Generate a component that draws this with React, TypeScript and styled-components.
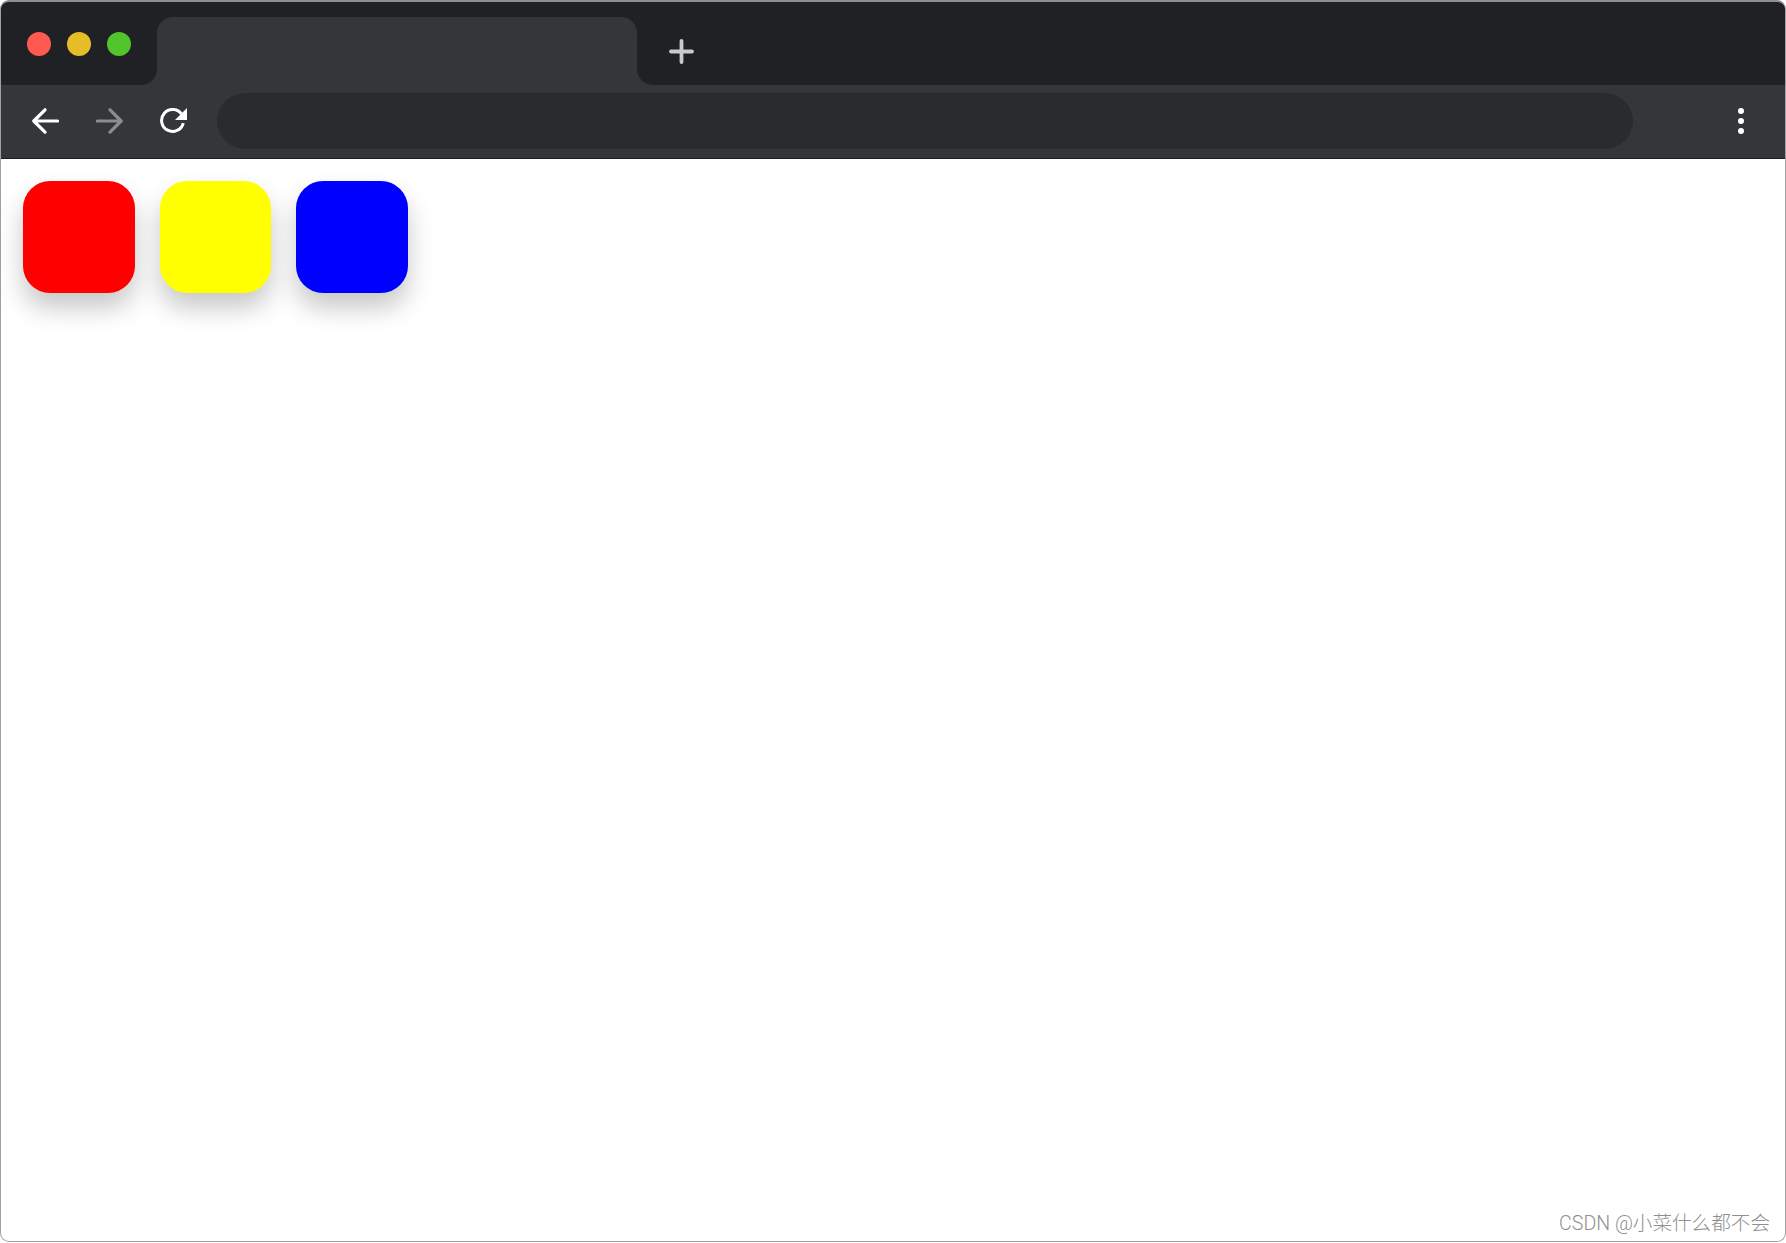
import React from 'react';
import styled, { createGlobalStyle } from 'styled-components';

const GlobalStyle = createGlobalStyle`
  html, body {
    margin: 0;
    padding: 0;
    background: #fff;
  }
  * {
    box-sizing: border-box;
  }
`;

const Frame = styled.div`
  position: relative;
  width: 1786px;
  height: 1242px;
  display: flex;
  flex-direction: column;
  overflow: hidden;
  background: #fff;
  border: 1px solid #a0a0a0;
  border-top: 2px solid #8e8e8e;
  border-radius: 9px;
`;

const TabStrip = styled.div`
  display: flex;
  flex: none;
  height: 83px;
  background: #33373a;
`;

const StripEnd = styled.div`
  display: flex;
  align-items: center;
  flex: none;
  width: 156px;
  padding: 1px 0 0 26px;
  gap: 16px;
  background: #202124;
  border-bottom-right-radius: 16px;
`;

const Light = styled.span<{ $color: string }>`
  width: 24px;
  height: 24px;
  border-radius: 50%;
  background: ${(p) => p.$color};
`;

const TabSlot = styled.div`
  flex: none;
  width: 480px;
  padding-top: 15px;
  background: #202124;
`;

const Tab = styled.div`
  height: 100%;
  background: #33373a;
  border-radius: 16px 16px 0 0;
`;

const NewTabArea = styled.div`
  flex: 1;
  padding: 37px 0 0 32px;
  background: #202124;
  border-bottom-left-radius: 16px;
`;

const Toolbar = styled.div`
  display: flex;
  align-items: center;
  flex: none;
  height: 74px;
  padding: 0 41px 1px 31px;
  background: #33373a;
  border-bottom: 1px solid #1c1d1f;
`;

const NavIcon = styled.svg`
  display: block;
  flex: none;
  width: 27px;
  height: 26px;
  margin-right: 37px;
`;

const AddressBar = styled.div`
  flex: 1;
  height: 56px;
  margin-left: -7px;
  background: #292c2f;
  border-radius: 28px;
`;

const MenuDots = styled.div`
  display: flex;
  flex-direction: column;
  flex: none;
  gap: 4px;
  margin-left: 105px;
`;

const Dot = styled.span`
  width: 6px;
  height: 6px;
  border-radius: 50%;
  background: #fff;
`;

const Content = styled.div`
  display: flex;
  flex: 1;
  align-items: flex-start;
  gap: 24.6px;
  padding: 22.3px 0 0 22.3px;
`;

const Tile = styled.div<{ $color: string }>`
  width: 111.7px;
  height: 111.7px;
  border-radius: 27px;
  background: ${(p) => p.$color};
  box-shadow: 0 15px 26px rgba(0, 0, 0, 0.22);
`;

const Watermark = styled.div`
  position: absolute;
  right: 15px;
  bottom: 3px;
  font-family: 'Roboto', 'Noto Sans CJK SC', sans-serif;
  font-size: 19.6px;
  font-weight: 300;
  line-height: 28px;
  color: #8f8f8f;
  white-space: nowrap;
`;

const LIGHTS = ['#ff5a52', '#e6bd27', '#53c52c'];
const TILES = ['#ff0000', '#ffff00', '#0000ff'];

export default function App() {
  return (
    <>
      <GlobalStyle />
      <Frame>
        <TabStrip>
          <StripEnd>
            {LIGHTS.map((color) => (
              <Light key={color} $color={color} />
            ))}
          </StripEnd>
          <TabSlot>
            <Tab />
          </TabSlot>
          <NewTabArea>
            <svg width="25" height="25" viewBox="0 0 25 25" style={{ display: 'block' }}>
              <path d="M12.5 2V23M2 12.5H23" stroke="#c8cbce" strokeWidth="3.8" strokeLinecap="round" fill="none" />
            </svg>
          </NewTabArea>
        </TabStrip>
        <Toolbar>
          <NavIcon viewBox="0 0 27 26">
            <path d="M25.5 13H2M13 1.8L1.8 13L13 24.2" stroke="#fff" strokeWidth="3.2" strokeLinecap="round" strokeLinejoin="round" fill="none" />
          </NavIcon>
          <NavIcon viewBox="0 0 27 26">
            <path d="M1.5 13H25M14 1.8L25.2 13L14 24.2" stroke="#8a8d8f" strokeWidth="3.2" strokeLinecap="round" strokeLinejoin="round" fill="none" />
          </NavIcon>
          <NavIcon viewBox="0 0 27 26">
            <path d="M23.27 15.06A11 11 0 1 1 21.6 6.1" stroke="#fff" strokeWidth="3" fill="none" />
            <path d="M27 0V12H15Z" fill="#fff" />
          </NavIcon>
          <AddressBar />
          <MenuDots>
            <Dot />
            <Dot />
            <Dot />
          </MenuDots>
        </Toolbar>
        <Content>
          {TILES.map((color) => (
            <Tile key={color} $color={color} />
          ))}
        </Content>
        <Watermark>CSDN @小菜什么都不会</Watermark>
      </Frame>
    </>
  );
}
